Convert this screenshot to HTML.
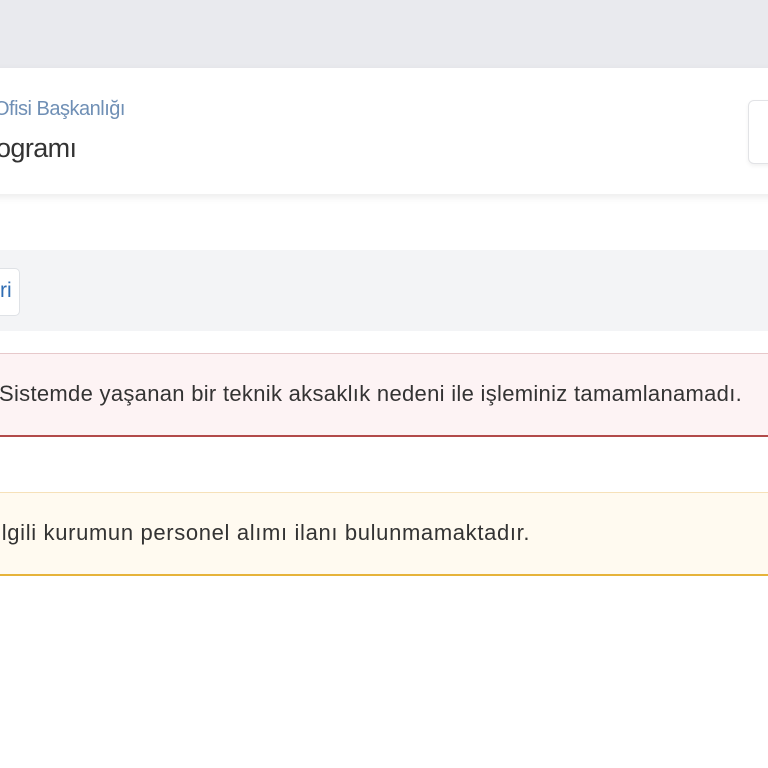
<!DOCTYPE html>
<html><head><meta charset="utf-8"><style>
body{margin:0;width:768px;height:768px;overflow:hidden;background:#fff;font-family:"Liberation Sans",sans-serif;position:relative}
.top{position:absolute;left:0;top:0;width:768px;height:68px;background:#e9eaee}
.card{position:absolute;left:-10px;top:68px;width:790px;height:126px;background:#fff;box-shadow:0 3px 8px rgba(0,0,0,.08)}
.sub{position:absolute;left:-6px;top:98px;font-size:20px;color:#6f8fb5;letter-spacing:-0.5px}
.title{position:absolute;left:-4px;top:133px;font-size:27px;color:#333;letter-spacing:-0.6px}
.rbtn{position:absolute;left:748px;top:100px;width:40px;height:62px;border:1px solid #e2e3e6;border-radius:6px;background:#fff;box-shadow:0 2px 4px rgba(0,0,0,.06)}
.bar{position:absolute;left:0;top:250px;width:768px;height:81px;background:#f3f4f6}
.btn{position:absolute;left:-10px;top:268px;width:28px;height:46px;border:1px solid #dfe2e6;border-radius:5px;background:#fff}
.btn span{position:absolute;left:9px;top:10px;font-size:21px;color:#2f6db3}
.a{position:absolute;left:-10px;width:790px;font-size:22px;letter-spacing:0.3px;color:#333}
.red{top:353px;height:81px;background:#fdf3f4;border-top:1px solid #e7c9cb;border-bottom:2px solid #b24a4a}
.yel{top:492px;height:81px;background:#fffaf0;border-top:1px solid #f6e1b9;border-bottom:2px solid #e6b33a}
.a span{position:absolute;left:9px;top:27px}
</style></head><body>
<div class="top"></div>
<div class="card"></div>
<div class="sub">Ofisi Başkanlığı</div>
<div class="title">ogramı</div>
<div class="rbtn"></div>
<div class="bar"></div>
<div class="btn"><span>ri</span></div>
<div class="a red"><span>Sistemde yaşanan bir teknik aksaklık nedeni ile işleminiz tamamlanamadı.</span></div>
<div class="a yel"><span style="left:5px;letter-spacing:0.65px">İlgili kurumun personel alımı ilanı bulunmamaktadır.</span></div>
</body></html>
